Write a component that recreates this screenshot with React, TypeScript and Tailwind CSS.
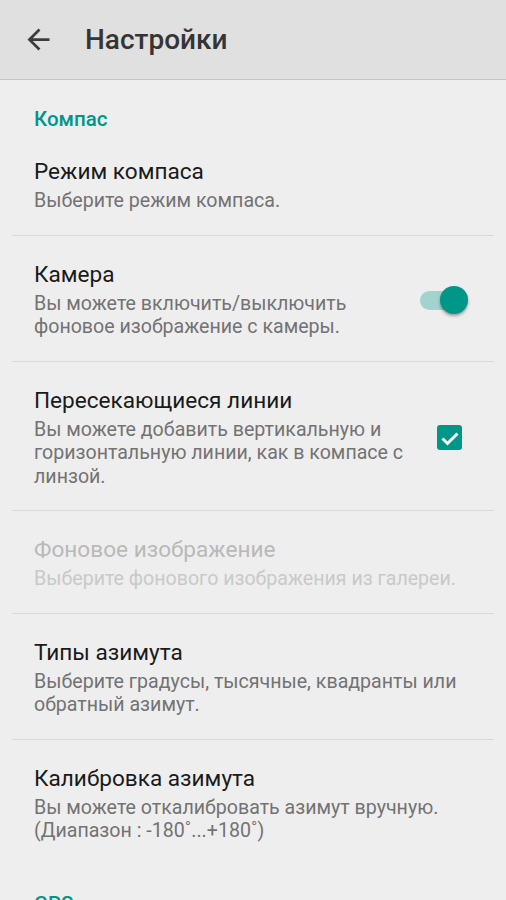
import { ReactNode } from "react";

type Pref = {
  title: string;
  summary: string[];
  disabled?: boolean;
  widget?: ReactNode;
  divider?: boolean;
};

function BackArrow() {
  return (
    <svg viewBox="0 0 24 24" className="w-[33px] h-[33px] fill-[#3c3c3c]">
      <path d="M20 11H7.83l5.59-5.59L12 4l-8 8 8 8 1.41-1.41L7.83 13H20v-2z" />
    </svg>
  );
}

function Toggle() {
  return (
    <div className="relative w-[48px] h-[28px] ml-[2px] flex items-center">
      <div className="w-[42px] h-[19px] rounded-full bg-[#a1d4ce]" />
      <div className="absolute right-0 top-0 w-[28px] h-[28px] rounded-full bg-[#009688] shadow-[0_2px_3px_rgba(0,0,0,0.35)]" />
    </div>
  );
}

function Checkbox() {
  return (
    <div className="ml-[19px] w-[25px] h-[25px] rounded-[3px] bg-[#009688] flex items-center justify-center">
      <svg viewBox="0 0 24 24" className="w-[24px] h-[24px]">
        <path d="M4.5 12.5l5 5L19.5 7.5" fill="none" stroke="white" strokeWidth="3" />
      </svg>
    </div>
  );
}

function Category({ label }: { label: string }) {
  return (
    <div className="pl-[34px] pt-[27px] pb-[2px] text-[20.5px] leading-[24px] font-medium text-[#009688]">
      {label}
    </div>
  );
}

function PrefRow({ pref }: { pref: Pref }) {
  return (
    <>
      <div className="flex items-center pl-[34px] pt-[26px] pb-[22px]">
        <div className="flex-1 min-w-0 pr-[8px]">
          <div
            className={`text-[22.6px] leading-[26px] ${pref.disabled ? "text-[#b9b9b9]" : "text-[#1a1a1a]"}`}
          >
            {pref.title}
          </div>
          <div
            className={`mt-[4px] text-[19.6px] leading-[23.5px] whitespace-nowrap ${pref.disabled ? "text-[#c9c9c9]" : "text-[#737373]"}`}
          >
            {pref.summary.map((line) => (
              <div key={line}>{line}</div>
            ))}
          </div>
        </div>
        {pref.widget && <div className="w-[88px] shrink-0 flex">{pref.widget}</div>}
      </div>
      {pref.divider && <div className="mx-[12px] h-px bg-[#d9d9d9]" />}
    </>
  );
}

const compass: Pref[] = [
  { title: "Режим компаса", summary: ["Выберите режим компаса."], divider: true },
  {
    title: "Камера",
    summary: ["Вы можете включить/выключить", "фоновое изображение с камеры."],
    widget: <Toggle />,
    divider: true,
  },
  {
    title: "Пересекающиеся линии",
    summary: ["Вы можете добавить вертикальную и", "горизонтальную линии, как в компасе с", "линзой."],
    widget: <Checkbox />,
    divider: true,
  },
  {
    title: "Фоновое изображение",
    summary: ["Выберите фонового изображения из галереи."],
    disabled: true,
    divider: true,
  },
  {
    title: "Типы азимута",
    summary: ["Выберите градусы, тысячные, квадранты или", "обратный азимут."],
    divider: true,
  },
  {
    title: "Калибровка азимута",
    summary: ["Вы можете откалибровать азимут вручную.", "(Диапазон : -180˚...+180˚)"],
  },
];

const gps: Pref[] = [
  { title: "Координаты", summary: ["Выберите формат координат."], divider: true },
];

export default function App() {
  return (
    <div className="h-[900px] w-full overflow-hidden bg-[#eeeeee] font-['Roboto','Noto_Sans',sans-serif]">
      <header className="h-[80px] bg-[#e0e0e0] border-b border-[#c4c4c4] flex items-center">
        <div className="ml-[22px]">
          <BackArrow />
        </div>
        <h1 className="ml-[30px] text-[28px] font-medium text-[#353535]">Настройки</h1>
      </header>

      <Category label="Компас" />
      {compass.map((p) => (
        <PrefRow key={p.title} pref={p} />
      ))}

      <Category label="GPS" />
      {gps.map((p) => (
        <PrefRow key={p.title} pref={p} />
      ))}
    </div>
  );
}
